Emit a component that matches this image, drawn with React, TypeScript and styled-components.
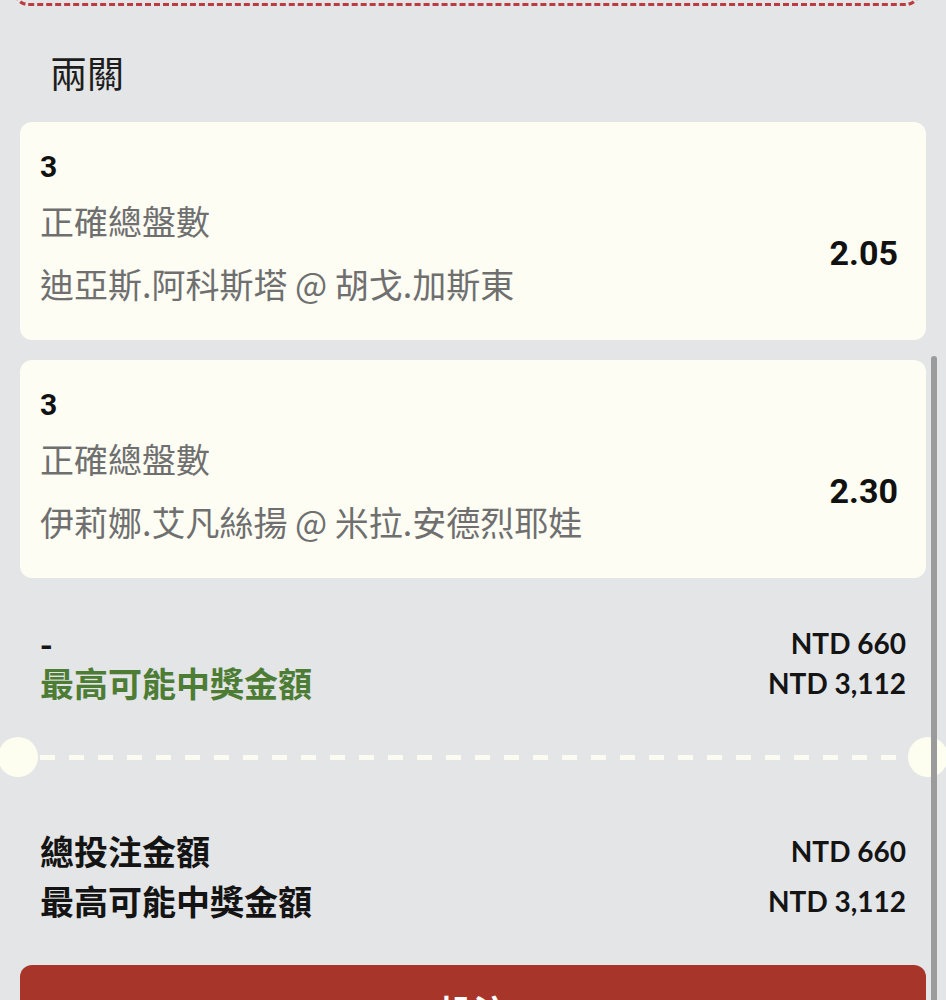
import React from 'react';
import styled, { createGlobalStyle } from 'styled-components';

const GlobalStyle = createGlobalStyle`
  html, body {
    margin: 0;
    padding: 0;
    background: #e4e5e7;
  }
  body {
    font-family: 'Noto Sans CJK TC', 'Noto Sans', sans-serif;
  }
`;

const Page = styled.div`
  position: relative;
  width: 946px;
  height: 1000px;
  overflow: hidden;
  background: #e4e5e7;
  display: flex;
  flex-direction: column;

  & > * {
    flex-shrink: 0;
  }
`;

const TicketEdge = styled.div`
  height: 30px;
  margin: -27px 26px 0 14px;
  border: 3px dashed #bd3a40;
  border-top: none;
  border-radius: 0 0 14px 14px;
`;

const Heading = styled.div`
  margin: 44px 0 28px 50px;
  font-size: 37px;
  line-height: 44px;
  font-weight: 400;
  color: #1d1d1d;
`;

const Card = styled.div`
  margin: 0 20px 20px;
  padding: 28px 28px 33px 20px;
  background: #fdfdf4;
  border-radius: 12px;
  display: flex;
  flex-direction: column;
`;

const Selection = styled.div`
  font-family: Roboto, 'Liberation Sans', sans-serif;
  font-weight: 700;
  font-size: 30px;
  line-height: 34px;
  color: #111;
  margin-bottom: 14px;
`;

const CardBody = styled.div`
  display: flex;
  align-items: center;
  justify-content: space-between;
`;

const Lines = styled.div`
  display: flex;
  flex-direction: column;
  gap: 17px;
`;

const Line = styled.div`
  font-size: 34px;
  line-height: 46px;
  color: #6f6f6f;
`;

const Odds = styled.div`
  font-family: Roboto, 'Liberation Sans', sans-serif;
  font-weight: 700;
  font-size: 34px;
  color: #111;
`;

const Summary = styled.div<{ $top: number; $rowHeight: number }>`
  margin-top: ${p => p.$top}px;
  padding: 0 40px;
  display: flex;
  flex-direction: column;

  & > div {
    height: ${p => p.$rowHeight}px;
  }
`;

const Row = styled.div`
  display: flex;
  align-items: center;
  justify-content: space-between;
`;

const Label = styled.div<{ $green?: boolean }>`
  font-size: 34px;
  line-height: 40px;
  font-weight: 700;
  color: ${p => (p.$green ? '#4d7d34' : '#141414')};
`;

const Amount = styled.div`
  font-family: Lato, 'Liberation Sans', sans-serif;
  font-weight: 700;
  font-size: 28px;
  color: #141414;
`;

const Divider = styled.div`
  margin-top: 34px;
  height: 40px;
  display: flex;
  align-items: center;
`;

const Notch = styled.div`
  flex: 0 0 40px;
  height: 40px;
  border-radius: 50%;
  background: #fdfdf0;
`;

const DashLine = styled.div`
  flex: 1;
  height: 5px;
  margin: 0 4px 0 2px;
  background: repeating-linear-gradient(to right, #fbfbf2 0 15px, transparent 15px 29px);
`;

const LeftNotch = styled(Notch)`
  margin-left: -2px;
`;

const RightNotch = styled(Notch)`
  margin-right: -2px;
`;

const SubmitButton = styled.button`
  margin: 39px 20px 0;
  height: 90px;
  border: none;
  border-radius: 12px;
  background: #a8352a;
  color: #fff;
  font-family: 'Noto Sans CJK TC', sans-serif;
  font-size: 34px;
  font-weight: 700;
`;

const ScrollThumb = styled.div`
  position: absolute;
  top: 356px;
  right: 9px;
  bottom: 0;
  width: 6px;
  border-radius: 3px 3px 0 0;
  background: #9b9b9b;
`;

const legs = [
  { pick: '3', market: '正確總盤數', match: '迪亞斯.阿科斯塔 @ 胡戈.加斯東', odds: '2.05' },
  { pick: '3', market: '正確總盤數', match: '伊莉娜.艾凡絲揚 @ 米拉.安德烈耶娃', odds: '2.30' },
];

export default function App() {
  return (
    <Page>
      <GlobalStyle />
      <TicketEdge />
      <Heading>兩關</Heading>
      {legs.map((leg, i) => (
        <Card key={i}>
          <Selection>{leg.pick}</Selection>
          <CardBody>
            <Lines>
              <Line>{leg.market}</Line>
              <Line>{leg.match}</Line>
            </Lines>
            <Odds>{leg.odds}</Odds>
          </CardBody>
        </Card>
      ))}
      <Summary $top={25} $rowHeight={40}>
        <Row>
          <Label>-</Label>
          <Amount>NTD 660</Amount>
        </Row>
        <Row>
          <Label $green>最高可能中獎金額</Label>
          <Amount>NTD 3,112</Amount>
        </Row>
      </Summary>
      <Divider>
        <LeftNotch />
        <DashLine />
        <RightNotch />
      </Divider>
      <Summary $top={49} $rowHeight={50}>
        <Row>
          <Label>總投注金額</Label>
          <Amount>NTD 660</Amount>
        </Row>
        <Row>
          <Label>最高可能中獎金額</Label>
          <Amount>NTD 3,112</Amount>
        </Row>
      </Summary>
      <SubmitButton>投注</SubmitButton>
      <ScrollThumb />
    </Page>
  );
}
